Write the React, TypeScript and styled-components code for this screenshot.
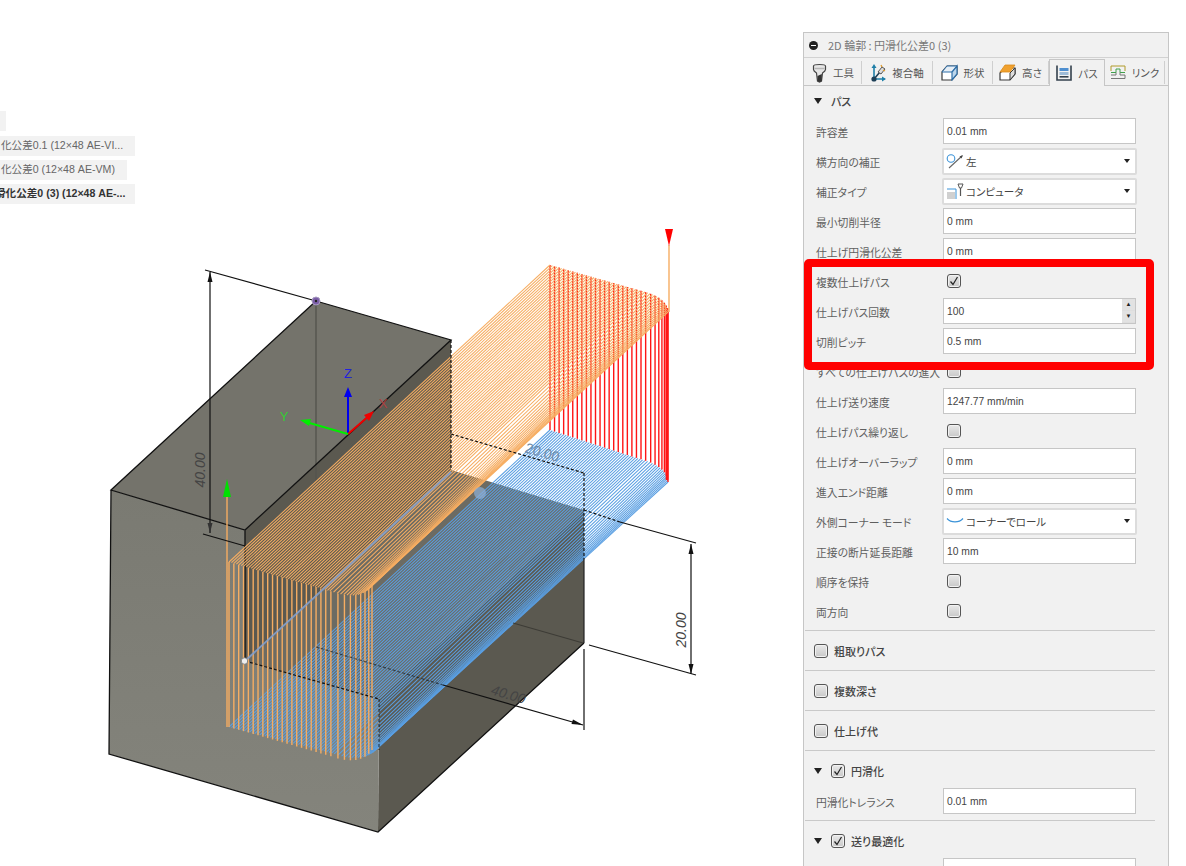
import React from 'react';
import styled, { createGlobalStyle } from 'styled-components';

const GlobalStyle = createGlobalStyle`
  html, body {
    margin: 0;
    padding: 0;
    background: #fff;
  }
`;

type Pt = [number, number];

// rim of one pass: straight run, then the rounded corner
function rim(a: Pt, b: Pt, c: Pt, d: Pt, t: number): Pt {
  const knee = 0.72;
  if (t <= knee) {
    const k = t / knee;
    return [a[0] + (b[0] - a[0]) * k, a[1] + (b[1] - a[1]) * k];
  }
  const k = (t - knee) / (1 - knee);
  const m = 1 - k;
  return [
    m * m * b[0] + 2 * m * k * c[0] + k * k * d[0],
    m * m * b[1] + 2 * m * k * c[1] + k * k * d[1],
  ];
}

const makePasses = (count: number) =>
  Array.from({ length: count }, (_, i) => {
    const t = i / (count - 1);
    return {
      i,
      t,
      front: rim([229, 562], [330, 591], [360, 602], [372, 585], t),
      back: rim([550, 265], [645, 292], [667, 298], [668, 312], t),
    };
  });

const stripes = makePasses(58);
const plunges = makePasses(30);

const seg = (x1: number, y1: number, x2: number, y2: number) => `M${x1} ${y1}L${x2} ${y2}`;

function ToolpathScene() {
  const drop = 165;
  return (
    <svg width="803" height="866" viewBox="0 0 803 866">
      <defs>
        <linearGradient id="frontFace" x1="0" y1="0" x2="0" y2="1">
          <stop offset="0" stopColor="#7a7a72" />
          <stop offset="1" stopColor="#84847c" />
        </linearGradient>
      </defs>

      {/* block */}
      <polygon points="316,301 451,340 245,530 111,490" fill="#74736b" />
      <polygon points="245,530 451,340 451,470 245,661" fill="#5b5950" />
      <polygon points="245,661 451,470 584,510 379,699" fill="#6c6b63" />
      <polygon points="379,699 584,510 584,643 378,832" fill="#5b5950" />
      <polygon points="111,490 245,530 245,661 379,699 378,832 109,754" fill="url(#frontFace)" />
      <path d={seg(316, 301, 316, 482)} stroke="#55544e" strokeWidth="1.4" fill="none" />
      <path
        d="M316 301L451 340L245 530L111 490L316 301M111 490L109 754L378 832L584 643M245 530V661"
        stroke="#111"
        strokeWidth="1.3"
        fill="none"
      />

      {/* floor passes */}
      <g stroke="#5a9fe2" strokeWidth="1.05">
        {stripes.map((p) => (
          <line
            key={p.i}
            x1={p.front[0] + p.t * 6}
            y1={p.front[1] + drop - p.t * 3}
            x2={p.back[0]}
            y2={p.back[1] + drop + p.t * 5}
          />
        ))}
      </g>
      {/* back retracts */}
      <g stroke="#ff1414" strokeWidth="1.4">
        {plunges.map((p) => (
          <line key={p.i} x1={p.back[0]} y1={p.back[1]} x2={p.back[0]} y2={p.back[1] + drop + p.t * 5} />
        ))}
        <line x1="667" y1="308" x2="667" y2="480" strokeWidth="2.6" />
      </g>
      {/* top passes */}
      <g stroke="#f6ad62" strokeWidth="1.05">
        {stripes.map((p) => (
          <line key={p.i} x1={p.front[0]} y1={p.front[1]} x2={p.back[0]} y2={p.back[1]} />
        ))}
      </g>
      {/* front plunges */}
      <g stroke="#f6ad62" strokeWidth="1.4">
        {plunges.map((p) => (
          <line key={p.i} x1={p.front[0]} y1={p.front[1]} x2={p.front[0]} y2={p.front[1] + drop} />
        ))}
        <line x1="227" y1="497" x2="227" y2="727" />
        <line x1="669" y1="245" x2="669" y2="312" />
      </g>

      {/* tool centre line through the stock */}
      <path d={seg(245, 661, 451, 472)} stroke="#7f9fd0" strokeWidth="2" fill="none" opacity="0.85" />
      <circle cx="480" cy="493" r="6" fill="#8fb0d8" opacity="0.7" />

      {/* hidden edges */}
      <g stroke="#111" strokeWidth="1.2" strokeDasharray="3 2" fill="none">
        <path d={seg(451, 340, 451, 470)} />
        <path d={seg(451, 434, 584, 473)} />
        <path d={seg(584, 473, 584, 560)} />
        <path d={seg(245, 661, 379, 699)} />
        <path d={seg(379, 699, 379, 750)} strokeOpacity="0.7" />
        <path d={seg(584, 510, 620, 522)} />
        <path d={seg(316, 647, 443, 685)} strokeOpacity="0.6" />
      </g>
      <path d={seg(584, 560, 584, 643)} stroke="#222" strokeWidth="1.2" fill="none" />
      <path d={seg(513, 623, 583, 643)} stroke="#3d3c36" strokeWidth="1.1" fill="none" />

      {/* dimensions */}
      <g stroke="#111" strokeWidth="1.2" fill="none">
        <path d="M205 270L316 301M210 272V533M203 534L245 546" />
        <path d="M620 522L696 543M589 645L696 675M691 544V674" />
        <path d="M584 649V730M443 685L583 725" />
      </g>
      <g fill="#111">
        <polygon points="210,272 207.5,282 212.5,282" />
        <polygon points="210,533 207.5,523 212.5,523" fill="#333" />
        <polygon points="691,544 688.5,554 693.5,554" />
        <polygon points="691,674 688.5,664 693.5,664" />
        <polygon points="583,725 573,719.5 571.5,724" />
      </g>
      <DimensionText x="0" y="0" transform="translate(205 470) rotate(-90)" textAnchor="middle">40.00</DimensionText>
      <DimensionText x="0" y="0" transform="translate(686 630) rotate(-90)" textAnchor="middle">20.00</DimensionText>
      <DimensionText x="0" y="0" transform="translate(507 699) rotate(17)" textAnchor="middle">40.00</DimensionText>
      <DimensionText x="0" y="0" transform="translate(541 457) rotate(17)" textAnchor="middle" $faint>20.00</DimensionText>

      {/* triad */}
      <path d={seg(348, 434, 348, 396)} stroke="#0000ee" strokeWidth="2" fill="none" />
      <polygon points="348,387 344,397 352,397" fill="#0000ee" />
      <path d={seg(348, 434, 370, 415)} stroke="#ee0000" strokeWidth="2" fill="none" />
      <polygon points="374,411 364,415 369,421" fill="#ee0000" />
      <path d={seg(348, 434, 306, 422)} stroke="#00ee00" strokeWidth="2" fill="none" />
      <polygon points="300,420 311,419 309,426" fill="#00ee00" />
      <AxisText x="348" y="378" fill="#2222dd">Z</AxisText>
      <AxisText x="383" y="408" fill="#b04040">X</AxisText>
      <AxisText x="284" y="421" fill="#33cc33">Y</AxisText>

      {/* markers */}
      <polygon points="227,479 223,497 231,497" fill="#00e000" />
      <polygon points="665,229 673,229 669,246" fill="#ff0000" />
      <circle cx="316" cy="301" r="4" fill="#7b5ea7" stroke="#a79ac0" strokeWidth="1" />
      <circle cx="316" cy="301" r="1.2" fill="#222" />
      <circle cx="244.5" cy="661" r="3.2" fill="#eee" stroke="#777" strokeWidth="0.8" />
    </svg>
  );
}

function ToolIcon() {
  return (
    <svg width="15" height="20" viewBox="0 0 15 20">
      <path d="M1.5 3C1.5 1 13.5 1 13.5 3V6.5C13.5 8 12 9 10.5 10L9.5 18L7.5 19L5.5 18L4.5 10C3 9 1.5 8 1.5 6.5Z" fill="#e6e6e6" stroke="#444" strokeWidth="1.2" />
      <path d="M5.5 13L9.8 11V18L7.5 19L5.5 18Z" fill="#333" />
      <path d="M2.5 5.5H12.5" stroke="#b5b5b5" strokeWidth="1.5" />
    </svg>
  );
}

function MultiAxisIcon() {
  return (
    <svg width="16" height="18" viewBox="0 0 16 18">
      <path d="M4 3V15H15" stroke="#1f7fa8" strokeWidth="1.6" fill="none" />
      <path d="M4 15L10 8" stroke="#1d3f57" strokeWidth="1.6" />
      <polygon points="4,0 1.5,4 6.5,4" fill="#1f7fa8" />
      <polygon points="16,15 12,12.5 12,17.5" fill="#1f7fa8" />
      <circle cx="4" cy="15" r="2.6" fill="#1d3f57" />
      <path d="M8 8L12 3L15 5L11 10Z" fill="#dcdcdc" stroke="#555" />
      <path d="M11 1L12 3M15 7L13 6" stroke="#e09a2c" strokeWidth="1.3" />
    </svg>
  );
}

function ShapeIcon() {
  return (
    <svg width="17" height="17" viewBox="0 0 17 17">
      <path d="M1 8L6 2H16V10L11 16H1Z" fill="#fff" stroke="#3a3a3a" strokeWidth="1.2" />
      <path d="M6 2H16L11 8H1Z" fill="#e6eef6" stroke="#2f6fa8" strokeWidth="1" />
      <path d="M11 8V16L16 10V2Z" fill="#bcd6ec" stroke="#2f6fa8" strokeWidth="1.2" />
    </svg>
  );
}

function HeightIcon() {
  return (
    <svg width="17" height="17" viewBox="0 0 17 17">
      <path d="M1 9L6 4H16V10L11 16H1Z" fill="#fff" stroke="#3a3a3a" strokeWidth="1.2" />
      <path d="M11 9V16L16 10V4Z" fill="#ddd" stroke="#3a3a3a" strokeWidth="1" />
      <path d="M1 8L6 1H16L11 8Z" fill="#f0a12e" stroke="#d98b1c" strokeWidth="0.8" />
    </svg>
  );
}

function PassIcon() {
  return (
    <svg width="16" height="16" viewBox="0 0 16 16">
      <path d="M1 0.5V15H15V0.5" stroke="#33404d" strokeWidth="1.6" fill="none" />
      <rect x="3.5" y="3" width="9" height="3" fill="#4f8fd0" />
      <rect x="3.5" y="7" width="9" height="3" fill="#9dbbd8" />
      <rect x="3.5" y="11" width="9" height="1.6" fill="#33404d" />
    </svg>
  );
}

function LinkIcon() {
  return (
    <svg width="16" height="15" viewBox="0 0 16 15">
      <path d="M1 6V1H15V6" stroke="#b09a2a" strokeWidth="1" fill="none" />
      <path d="M1 7.5H6V4H10V7.5H15" stroke="#3fa04c" strokeWidth="1" fill="none" />
      <path d="M1 13.5H15V10H10V7.5M6 7.5V10H1" stroke="#777" strokeWidth="1" fill="none" />
    </svg>
  );
}

function SideIcon() {
  return (
    <svg width="18" height="15" viewBox="0 0 18 15">
      <circle cx="5" cy="4.5" r="3.8" fill="none" stroke="#3b93d8" strokeWidth="1.1" />
      <path d="M3 14L16 2" stroke="#666" strokeWidth="1.1" />
      <polygon points="17,1 13.5,2.5 15.5,4.5" fill="#444" />
    </svg>
  );
}

function CompensationIcon() {
  return (
    <svg width="18" height="17" viewBox="0 0 18 17">
      <rect x="1" y="9" width="8" height="7" fill="#d0d0d0" />
      <path d="M1 6H10V16" stroke="#3b93d8" strokeWidth="1" fill="none" />
      <path d="M12 1H17L15.5 5H13.5Z" fill="#fff" stroke="#555" />
      <path d="M14.5 5V13" stroke="#555" strokeWidth="1.2" />
    </svg>
  );
}

function CornerRollIcon() {
  return (
    <svg width="18" height="8" viewBox="0 0 18 8">
      <path d="M1 1.5C5 6 13 6 17 1.5" fill="none" stroke="#3b93d8" strokeWidth="1.2" />
    </svg>
  );
}

type Row =
  | { kind: 'input'; label: string; value: string }
  | { kind: 'select'; label: string; value: string; icon: React.ReactNode }
  | { kind: 'spin'; label: string; value: string }
  | { kind: 'check'; label: string; checked?: boolean };

const passRows: Row[] = [
  { kind: 'input', label: '許容差', value: '0.01 mm' },
  { kind: 'select', label: '横方向の補正', value: '左', icon: <SideIcon /> },
  { kind: 'select', label: '補正タイプ', value: 'コンピュータ', icon: <CompensationIcon /> },
  { kind: 'input', label: '最小切削半径', value: '0 mm' },
  { kind: 'input', label: '仕上げ円滑化公差', value: '0 mm' },
  { kind: 'check', label: '複数仕上げパス', checked: true },
  { kind: 'spin', label: '仕上げパス回数', value: '100' },
  { kind: 'input', label: '切削ピッチ', value: '0.5 mm' },
  { kind: 'check', label: 'すべての仕上げパスの進入' },
  { kind: 'input', label: '仕上げ送り速度', value: '1247.77 mm/min' },
  { kind: 'check', label: '仕上げパス繰り返し' },
  { kind: 'input', label: '仕上げオーバーラップ', value: '0 mm' },
  { kind: 'input', label: '進入エンド距離', value: '0 mm' },
  { kind: 'select', label: '外側コーナー モード', value: 'コーナーでロール', icon: <CornerRollIcon /> },
  { kind: 'input', label: '正接の断片延長距離', value: '10 mm' },
  { kind: 'check', label: '順序を保持' },
  { kind: 'check', label: '両方向' },
];

const tabs = [
  { label: '工具', icon: <ToolIcon />, width: 57 },
  { label: '複合軸', icon: <MultiAxisIcon />, width: 71 },
  { label: '形状', icon: <ShapeIcon />, width: 60 },
  { label: '高さ', icon: <HeightIcon />, width: 56 },
  { label: 'パス', icon: <PassIcon />, width: 56, active: true },
  { label: 'リンク', icon: <LinkIcon />, width: 60 },
];

function Check({ checked }: { checked?: boolean }) {
  return (
    <CheckBox>
      {checked && (
        <svg width="10" height="10" viewBox="0 0 10 10">
          <path d="M1.5 5.5L4 8.5L8.5 1" fill="none" stroke="#222" strokeWidth="1.2" />
        </svg>
      )}
    </CheckBox>
  );
}

function FieldRow({ row }: { row: Row }) {
  return (
    <RowLine>
      <RowLabel>{row.label}</RowLabel>
      {row.kind === 'input' && <InputBox>{row.value}</InputBox>}
      {row.kind === 'spin' && (
        <InputBox>
          {row.value}
          <Spinner>
            <SpinButton>▲</SpinButton>
            <SpinButton>▼</SpinButton>
          </Spinner>
        </InputBox>
      )}
      {row.kind === 'select' && (
        <SelectBox>
          {row.icon}
          <SelectText>{row.value}</SelectText>
          <Caret />
        </SelectBox>
      )}
      {row.kind === 'check' && (
        <CheckCell>
          <Check checked={row.checked} />
        </CheckCell>
      )}
    </RowLine>
  );
}

export default function App() {
  return (
    <Page>
      <GlobalStyle />
      <Viewport>
        <ToolpathScene />
        <BrowserTree>
          <TreeStub />
          <TreeRow $width={135}>化公差0.1 (12×48 AE-VI...</TreeRow>
          <TreeRow $width={127}>化公差0 (12×48 AE-VM)</TreeRow>
          <TreeRow $width={135} $bold>
            <ClippedText>滑化公差0 (3) (12×48 AE-...</ClippedText>
          </TreeRow>
        </BrowserTree>
      </Viewport>

      <Panel>
        <TitleBar>
          <MinusDot />
          <TitleText>2D 輪郭 : 円滑化公差0 (3)</TitleText>
        </TitleBar>
        <TabBar>
          {tabs.map((t) => (
            <Tab key={t.label} $width={t.width} $active={t.active}>
              {t.icon}
              <span>{t.label}</span>
            </Tab>
          ))}
        </TabBar>

        <PanelBody>
          <Section>
            <SectionHead>
              <Triangle />
              <SectionTitle>パス</SectionTitle>
            </SectionHead>
            {passRows.map((r) => (
              <FieldRow key={r.label} row={r} />
            ))}
          </Section>

          <Section>
            <SectionHead>
              <Check />
              <SectionTitle>粗取りパス</SectionTitle>
            </SectionHead>
          </Section>
          <Section>
            <SectionHead>
              <Check />
              <SectionTitle>複数深さ</SectionTitle>
            </SectionHead>
          </Section>
          <Section>
            <SectionHead>
              <Check />
              <SectionTitle>仕上げ代</SectionTitle>
            </SectionHead>
          </Section>
          <Section>
            <SectionHead>
              <Triangle />
              <Check checked />
              <SectionTitle>円滑化</SectionTitle>
            </SectionHead>
            <FieldRow row={{ kind: 'input', label: '円滑化トレランス', value: '0.01 mm' }} />
          </Section>
          <Section>
            <SectionHead>
              <Triangle />
              <Check checked />
              <SectionTitle>送り最適化</SectionTitle>
            </SectionHead>
            <FieldRow row={{ kind: 'input', label: '', value: '' }} />
          </Section>

          <Highlight />
        </PanelBody>
      </Panel>
    </Page>
  );
}

const cjk = `"Noto Sans CJK JP", "Liberation Sans", sans-serif`;
const latin = `"Liberation Sans", "Noto Sans CJK JP", sans-serif`;

const Page = styled.div`
  display: flex;
  align-items: flex-start;
  width: 1186px;
  height: 866px;
  overflow: hidden;
  background: #fff;
`;

const Viewport = styled.div`
  position: relative;
  flex: 0 0 803px;
  height: 866px;

  svg {
    display: block;
  }
`;

const DimensionText = styled.text<{ $faint?: boolean }>`
  font-family: ${latin};
  font-size: 14px;
  font-style: ${(p) => (p.$faint ? 'normal' : 'italic')};
  fill: ${(p) => (p.$faint ? '#6f8aa8' : '#444')};
`;

const AxisText = styled.text`
  font-family: ${latin};
  font-size: 13px;
  text-anchor: middle;
`;

const BrowserTree = styled.div`
  position: absolute;
  top: 111px;
  left: 0;
  display: flex;
  flex-direction: column;
  gap: 4px;
  font-family: ${latin};
`;

const TreeStub = styled.div`
  width: 6px;
  height: 20px;
  margin-bottom: 1px;
  background: #f2f2f2;
`;

const TreeRow = styled.div<{ $width: number; $bold?: boolean }>`
  width: ${(p) => p.$width}px;
  height: 20px;
  padding-left: 1px;
  box-sizing: border-box;
  overflow: hidden;
  white-space: nowrap;
  background: #f2f2f2;
  color: ${(p) => (p.$bold ? '#333' : '#666')};
  font-size: 10.6px;
  font-weight: ${(p) => (p.$bold ? 700 : 400)};
  line-height: 19px;
`;

const ClippedText = styled.span`
  display: inline-block;
  margin-left: -6px;
`;

const Panel = styled.div`
  position: relative;
  flex: 0 0 366px;
  box-sizing: border-box;
  margin-top: 32px;
  background: #f1f1f1;
  border: 1px solid #c6c6c6;
`;

const TitleBar = styled.div`
  display: flex;
  align-items: center;
  height: 24px;
  padding-left: 5px;
  border-bottom: 1px solid #d2d2d2;
`;

const MinusDot = styled.span`
  position: relative;
  width: 9px;
  height: 9px;
  border-radius: 50%;
  background: #222;

  &::after {
    content: '';
    position: absolute;
    left: 2px;
    top: 4px;
    width: 5px;
    height: 1px;
    background: #fff;
  }
`;

const TitleText = styled.span`
  margin-left: 10px;
  color: #777;
  font-family: ${cjk};
  font-size: 11px;
  font-feature-settings: 'palt';
`;

const TabBar = styled.div`
  display: flex;
  align-items: flex-end;
  height: 27px;
  padding-left: 1px;
  border-bottom: 1px solid #c6c6c6;
`;

const Tab = styled.div<{ $width: number; $active?: boolean }>`
  position: relative;
  display: flex;
  align-items: center;
  justify-content: center;
  gap: 6px;
  box-sizing: border-box;
  width: ${(p) => p.$width}px;
  height: ${(p) => (p.$active ? 27 : 23)}px;
  margin-bottom: ${(p) => (p.$active ? -1 : 1)}px;
  background: #f1f1f1;
  color: #555;
  font-family: ${cjk};
  font-size: 10.5px;
  font-feature-settings: 'palt';
  border-right: 1px solid ${(p) => (p.$active ? '#c6c6c6' : '#cfcfcf')};
  border-left: ${(p) => (p.$active ? '1px solid #c6c6c6' : '0')};
  border-top: ${(p) => (p.$active ? '1px solid #c6c6c6' : '0')};
`;

const PanelBody = styled.div`
  position: relative;
  padding: 0 0 0 1px;

  & > div:first-child {
    margin-top: -5px;
  }
`;

const Section = styled.div`
  width: 350px;
  box-sizing: content-box;
  padding-bottom: 4px;
  border-bottom: 1px solid #c9c9c9;
`;

const SectionHead = styled.div`
  display: flex;
  align-items: center;
  gap: 6px;
  height: 40px;
  padding-left: 9px;
  margin-bottom: -5px;
`;

const SectionTitle = styled.span`
  color: #444;
  font-family: ${cjk};
  font-size: 11px;
  font-weight: 500;
  font-feature-settings: 'palt';
`;

const Triangle = styled.span`
  width: 0;
  height: 0;
  margin-right: 3px;
  border-left: 4px solid transparent;
  border-right: 4px solid transparent;
  border-top: 6px solid #222;
`;

const RowLine = styled.div`
  display: flex;
  align-items: center;
  height: 30px;
  padding-left: 11px;
`;

const RowLabel = styled.span`
  flex: 0 0 127px;
  color: #5f5f5f;
  font-family: ${cjk};
  font-size: 10.8px;
  font-feature-settings: 'palt';
  white-space: nowrap;
  padding-top: 1px;
`;

const InputBox = styled.div`
  position: relative;
  display: flex;
  align-items: center;
  box-sizing: border-box;
  width: 193px;
  height: 26px;
  padding-left: 3px;
  background: #fff;
  border: 1px solid #c6c6c6;
  color: #444;
  font-family: ${latin};
  font-size: 10.3px;
`;

const Spinner = styled.div`
  position: absolute;
  top: 0;
  right: 0;
  display: flex;
  flex-direction: column;
  width: 13px;
  height: 24px;
  background: #dedede;
`;

const SpinButton = styled.span`
  flex: 1;
  margin-bottom: 1px;
  background: #e2e2e2;
  color: #222;
  font-size: 6px;
  line-height: 11px;
  text-align: center;
`;

const SelectBox = styled.div`
  display: flex;
  align-items: center;
  gap: 2px;
  box-sizing: border-box;
  width: 195px;
  height: 27px;
  margin-left: -1px;
  padding: 0 5px 0 2px;
  background: #fff;
  border: 2px solid #dcdcdc;
  border-radius: 2px;
  color: #444;
  font-family: ${cjk};
  font-size: 10.5px;
  font-feature-settings: 'palt';
`;

const SelectText = styled.span`
  flex: 1;
`;

const Caret = styled.span`
  width: 0;
  height: 0;
  border-left: 3px solid transparent;
  border-right: 3px solid transparent;
  border-top: 4px solid #222;
`;

const CheckCell = styled.div`
  display: flex;
  padding-left: 4px;
`;

const CheckBox = styled.span`
  display: inline-flex;
  align-items: center;
  justify-content: center;
  box-sizing: border-box;
  width: 14px;
  height: 14px;
  border: 1px solid #555;
  border-radius: 3px;
  background: linear-gradient(#e9e9e9, #c8c8c8);
  box-shadow: inset 0 0 0 1px #f2f2f2;
`;

const Highlight = styled.div`
  position: absolute;
  top: 178px;
  left: 0;
  box-sizing: border-box;
  width: 350px;
  height: 111px;
  border: 8px solid #ff0000;
  border-radius: 5px;
  pointer-events: none;
`;
